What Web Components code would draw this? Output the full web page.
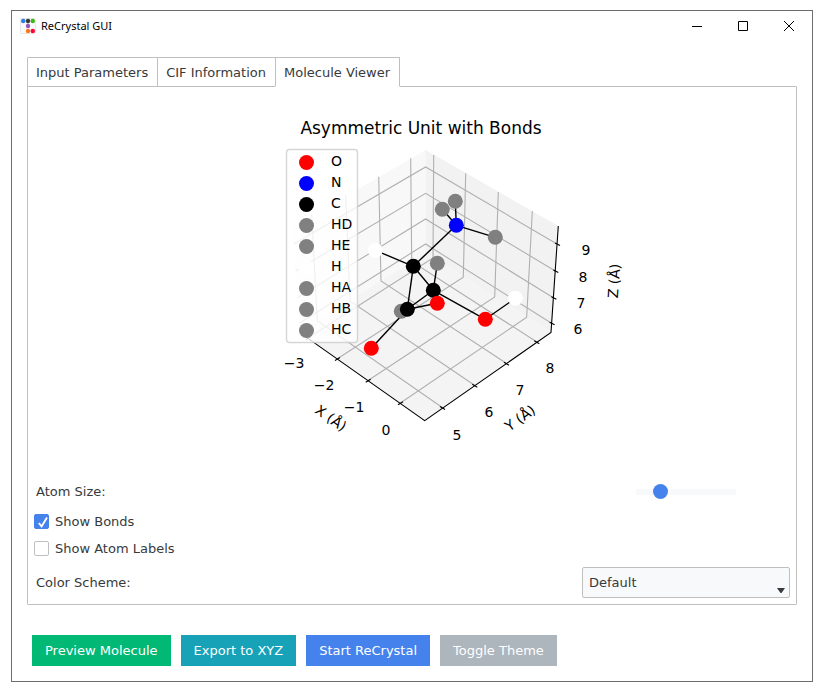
<!DOCTYPE html>
<html lang="en">
<head>
<meta charset="utf-8">
<title>ReCrystal GUI</title>
<style>
  body { margin: 10px 13px 8px 11px; background: #fff; font: 13px/16px "DejaVu Sans", sans-serif; color: #373a3c; }
</style>
</head>
<body>
<app-window caption="ReCrystal GUI">
  <tab-panel>
    <tab-item slot="tabs">Input Parameters</tab-item>
    <tab-item slot="tabs">CIF Information</tab-item>
    <tab-item slot="tabs" selected>Molecule Viewer</tab-item>
    <molecule-plot></molecule-plot>
    <range-row label="Atom Size:" value="20"></range-row>
    <check-row label="Show Bonds" checked></check-row>
    <check-row label="Show Atom Labels"></check-row>
    <select-row label="Color Scheme:" option="Default"></select-row>
  </tab-panel>
  <action-button slot="actions" tone="success">Preview Molecule</action-button>
  <action-button slot="actions" tone="info">Export to XYZ</action-button>
  <action-button slot="actions" tone="primary">Start ReCrystal</action-button>
  <action-button slot="actions" tone="secondary">Toggle Theme</action-button>
</app-window>
<script>
const define = (name, render) => customElements.define(name, class extends HTMLElement {
  constructor() { super(); this.attachShadow({ mode: "open" }); }
  connectedCallback() { this.shadowRoot.innerHTML = render(this); }
});

define("app-window", el => `
<style>
  :host { display: flex; flex-direction: column; box-sizing: border-box; min-height: calc(100vh - 18px); border: 1px solid #6d6d6d; background: #fff; }
  header { display: flex; align-items: center; height: 29px; padding-left: 8px; gap: 5px; }
  h1 { flex: 1; margin: 0; font: 11px/16px "Noto Sans", sans-serif; color: #000; }
  .controls { display: flex; }
  .controls button { width: 46px; height: 29px; padding: 0; border: 0; background: none; display: grid; place-items: center; }
  main { flex: 1; display: flex; flex-direction: column; padding: 17px 15px 0; }
  footer { display: flex; flex-wrap: wrap; gap: 10px; padding: 30px 20px 15px; }
</style>
<header>
  <svg width="16" height="16" viewBox="0 0 16 16" aria-hidden="true">
    <rect x=".5" y=".5" width="15" height="15" rx="1" fill="#fafafa" stroke="#e6e6e6"/>
    <path d="M3 3h10M8 3v5M9 13h4" stroke="#bbb"/>
    <circle cx="3.2" cy="3" r="2.2" fill="#2b7de9"/><circle cx="8" cy="3" r="2.2" fill="#3a3a3a"/><circle cx="12.8" cy="3" r="2.2" fill="#3fb618"/>
    <circle cx="8" cy="8" r="2.2" fill="#9954bb"/><circle cx="8" cy="13" r="2.2" fill="#ff7518"/><circle cx="12.8" cy="13" r="2.2" fill="#ff0039"/>
  </svg>
  <h1>${el.getAttribute("caption")}</h1>
  <div class="controls">
    <button aria-label="Minimize"><svg width="10" height="10"><path d="M0 5.5h10" stroke="#000"/></svg></button>
    <button aria-label="Maximize"><svg width="10" height="10"><path d="M.5.5h9v9h-9z" fill="none" stroke="#000"/></svg></button>
    <button aria-label="Close"><svg width="10" height="10"><path d="M0 0l10 10M10 0L0 10" stroke="#000"/></svg></button>
  </div>
</header>
<main><slot></slot></main>
<footer><slot name="actions"></slot></footer>`);

define("tab-panel", () => `
<style>
  :host { flex: 1; display: flex; flex-direction: column; }
  nav { display: flex; margin-bottom: -1px; }
  section { flex: 1; display: flex; flex-direction: column; padding: 6px; border: 1px solid #bfbfbf; border-radius: 1px; }
</style>
<nav role="tablist"><slot name="tabs"></slot></nav>
<section><slot></slot></section>`);

define("tab-item", el => `
<style>
  :host { display: block; margin-right: -1px; z-index: 0; }
  :host([selected]) { z-index: 1; }
  button { display: block; height: 30px; padding: 1px 9px 0 8px; font: inherit; color: inherit; background: #fff; border: 1px solid #bfbfbf; border-radius: 1px 1px 0 0; }
  button[aria-selected=true] { border-bottom-color: #fff; }
</style>
<button role="tab" aria-selected="${el.hasAttribute("selected")}"><slot></slot></button>`);

define("range-row", el => `
<style>
  :host { display: grid; grid-template-columns: 1fr 208px; align-items: center; height: 26px; margin-bottom: 3px; }
  label { padding-left: 2px; }
  input { appearance: none; justify-self: center; width: 100px; height: 16px; margin: 0; background: none; }
  input::-webkit-slider-runnable-track { height: 6px; background: #f8f9fa; }
  input::-webkit-slider-thumb { appearance: none; width: 15px; height: 15px; margin-top: -5px; border-radius: 50%; background: #4582ec; }
</style>
<label for="range">${el.getAttribute("label")}</label>
<input id="range" type="range" min="0" max="100" value="${el.getAttribute("value")}">`);

define("check-row", el => `
<style>
  :host { display: block; }
  label { display: flex; align-items: center; gap: 6px; height: 27px; }
  .box { display: grid; }
  .box > * { grid-area: 1 / 1; }
  input { appearance: none; width: 15px; height: 15px; margin: 0; border: 1px solid #bfbfbf; border-radius: 2px; background: #fff; }
  input:checked { border-color: #4582ec; background: #4582ec; }
  svg { pointer-events: none; visibility: hidden; }
  input:checked + svg { visibility: visible; }
</style>
<label><span class="box"><input type="checkbox" ${el.hasAttribute("checked") ? "checked" : ""}>
<svg width="15" height="15" viewBox="0 0 15 15"><path d="M4.8 9L7.6 12.4L13 3.6" fill="none" stroke="#fff" stroke-width="1.9"/></svg></span>${el.getAttribute("label")}</label>`);

define("select-row", el => `
<style>
  :host { display: grid; grid-template-columns: 1fr 208px; align-items: center; margin-top: 5px; }
  label { padding-left: 2px; }
  .field { display: grid; }
  .field > * { grid-area: 1 / 1; }
  select { appearance: none; height: 31px; padding: 0 20px 0 6px; font: inherit; color: inherit; background: #f8f9fa; border: 1px solid #bfbfbf; border-radius: 2px; }
  svg { place-self: end; margin: 0 5px 5px 0; pointer-events: none; }
</style>
<label for="choice">${el.getAttribute("label")}</label>
<div class="field"><select id="choice"><option>${el.getAttribute("option")}</option></select>
<svg width="8" height="5" viewBox="0 0 8 5"><path d="M0 0h8L4.5 5h-1z" fill="#373a3c"/></svg></div>`);

define("action-button", el => `
<style>
  :host { display: block; }
  button { display: block; height: 31px; padding: 0 13px; border: 0; font: inherit; color: #fff; background: var(--tone); }
  :host([tone=success]) { --tone: #02b875; }
  :host([tone=info]) { --tone: #17a2b8; }
  :host([tone=primary]) { --tone: #4582ec; }
  :host([tone=secondary]) { --tone: #adb5bd; }
</style>
<button><slot></slot></button>`);

/* Projected axis lines of the 3D box */
const floorX = [[308,338,433,258,433.7,155],[337,359,463.3,277.3,465.7,173.3],[367.7,380.7,494.7,297,498.3,192],[400,403.3,526.7,317.3,532.3,211]];
const floorY = [[443,408,317.3,320.7,311.7,215],[475.3,385.7,350,301,345.7,195],[507,363.7,381,281,378.7,176.7],[537.3,342.3,411.7,261.5,410.7,158.3]];
const levels = [[293.7,244,425.6,167,557,244],[295.5,271,425.6,193.3,555.3,271],[297.5,297.7,425.6,219,553.4,297.7],[299.3,323.3,425.6,244,551.6,323.3]];
const atoms = [
  [375.3,250.3,"#fff"],[442.3,209.3,"gray"],[455.3,201.3,"gray"],[495.3,237.3,"gray"],[437.3,263.3,"gray"],[401.3,311.3,"gray"],
  [515.3,298.3,"#fff"],[413.3,266.3,"#000"],[456.3,225.3,"#00f"],[433.3,290.3,"#000"],[407.3,309.3,"#000"],
  [437.3,303.3,"red"],[485.3,319.3,"red"],[371.3,348.3,"red"]];
const bonds = [[7,0],[7,8],[7,9],[7,10],[9,4],[9,10],[9,12],[12,6],[10,11],[10,13],[10,5],[8,1],[8,2],[8,3]];
const legend = [["O","red"],["N","#00f"],["C","#000"],["HD","gray"],["HE","gray"],["H","#fff"],["HA","gray"],["HB","gray"],["HC","gray"]];
const ticks = [["−3",294,368],["−2",324,390],["−1",354,412],["0",386,435],["5",457,440],["6",489,417],["7",520,395],["8",550,373],["9",586,255],["8",583,282],["7",581,308],["6",578,334]];

define("molecule-plot", () => `
<style>
  :host { flex: 1; display: grid; place-items: start center; }
  svg { display: block; max-width: 100%; font: 14px "DejaVu Sans", sans-serif; fill: #000; }
  .title { font-size: 17px; }
  .mid { text-anchor: middle; }
</style>
<svg width="440" height="386" viewBox="192 93 440 386" role="img" aria-label="Asymmetric Unit with Bonds">
  <path d="M425.7 150L293 226.5L299.5 332.4L425.6 252.5z" fill="#f8f8f8"/>
  <path d="M425.7 150L558.3 226L551 332.4L425.6 252.5z" fill="#f2f2f2"/>
  <path d="M425.6 252.5L551 332.4L424.7 420.7L299.5 332.4z" fill="#f4f4f4"/>
  <g fill="none" stroke="#b0b0b0" stroke-width="1.1">
    ${[...floorX, ...floorY, ...levels].map(p => `<polyline points="${p}"/>`).join("")}
  </g>
  <g fill="none" stroke="#000" stroke-width="1.1">
    <path d="M299.5 332.4L424.7 420.7L551 332.4L558.3 226"/>
    ${floorX.map(p => `<path d="M${p[0] - 2} ${p[1] + 1.5}l5 -3"/>`).join("")}
    ${floorY.map(p => `<path d="M${p[0] - 3} ${p[1] - 1.5}l5 3"/>`).join("")}
    ${levels.map(p => `<path d="M${p[4] - 2} ${p[5] - 1}l5 2.5"/>`).join("")}
  </g>
  <g stroke="#000" stroke-width="1.4">
    ${bonds.map(([a, b]) => `<line x1="${atoms[a][0]}" y1="${atoms[a][1]}" x2="${atoms[b][0]}" y2="${atoms[b][1]}"/>`).join("")}
  </g>
  ${atoms.map(a => `<circle cx="${a[0]}" cy="${a[1]}" r="7.5" fill="${a[2]}"/>`).join("")}
  <rect x="286.5" y="149.5" width="71" height="193" rx="3" fill="#fff" fill-opacity=".8" stroke="#ccc" stroke-opacity=".8" stroke-width="1.4"/>
  ${legend.map(([t, c], i) => `<circle cx="306.5" cy="${162.5 + 21 * i}" r="7.5" fill="${c}"/><text x="331" y="${166 + 21 * i}">${t}</text>`).join("")}
  ${ticks.map(([t, x, y]) => `<text class="mid" x="${x}" y="${y}">${t}</text>`).join("")}
  <text class="mid" transform="translate(331 418) rotate(35)" y="5">X (Å)</text>
  <text class="mid" transform="translate(520 418) rotate(-35)" y="5">Y (Å)</text>
  <text class="mid" transform="translate(614 281) rotate(-86)" y="5">Z (Å)</text>
  <text class="mid title" x="421" y="134">Asymmetric Unit with Bonds</text>
</svg>`);
</script>
</body>
</html>
